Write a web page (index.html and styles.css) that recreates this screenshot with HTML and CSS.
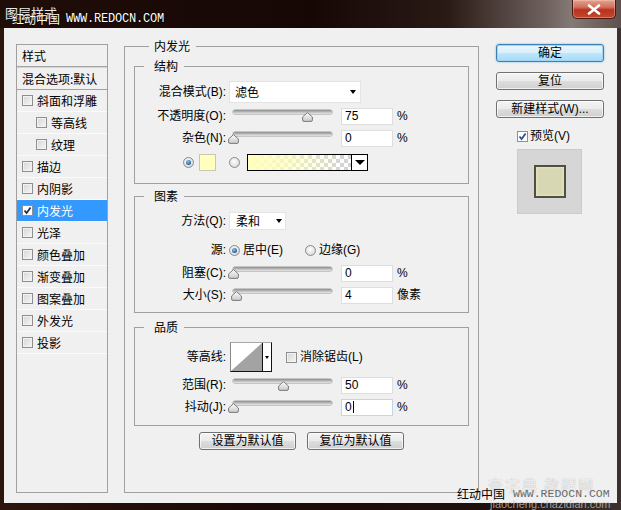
FILE: index.html
```html
<!DOCTYPE html>
<html lang="zh-CN">
<head>
<meta charset="utf-8">
<title>图层样式</title>
<link rel="stylesheet" href="styles.css">
</head>
<body>
<div class="window">
  <div class="titlebar">
    <span class="title">图层样式</span>
    <div class="close">
      <svg width="14" height="11" viewBox="0 0 14 11"><path d="M2 1.5 L12 9.5 M12 1.5 L2 9.5" stroke="#fff" stroke-width="2.6" stroke-linecap="round"/></svg>
    </div>
    <div class="wm-top"><span class="wm-cn">红动中国</span><span class="wm-url">WWW.REDOCN.COM</span></div>
  </div>

  <div class="client">
    <div class="styles">
      <div class="list-head">样式</div>
      <div class="list-head second">混合选项:默认</div>
      <div class="item"><span class="cb"></span>斜面和浮雕</div>
      <div class="item sub"><span class="cb"></span>等高线</div>
      <div class="item sub"><span class="cb"></span>纹理</div>
      <div class="item"><span class="cb"></span>描边</div>
      <div class="item"><span class="cb"></span>内阴影</div>
      <div class="item selected"><span class="cb on"><svg width="9" height="9" viewBox="0 0 9 9"><path d="M1.5 4.5 L3.6 7 L7.6 1.5" fill="none" stroke="#1f2d5c" stroke-width="1.8"/></svg></span>内发光</div>
      <div class="item"><span class="cb"></span>光泽</div>
      <div class="item"><span class="cb"></span>颜色叠加</div>
      <div class="item"><span class="cb"></span>渐变叠加</div>
      <div class="item"><span class="cb"></span>图案叠加</div>
      <div class="item"><span class="cb"></span>外发光</div>
      <div class="item"><span class="cb"></span>投影</div>
    </div>

    <fieldset class="main">
      <legend class="main-legend">内发光</legend>

      <fieldset class="group g-struct">
        <legend>结构</legend>
        <div class="row">
          <span class="lbl">混合模式(B):</span>
          <div class="select blend"><span>滤色</span><i class="arrow"></i></div>
        </div>
        <div class="row gap2">
          <span class="lbl">不透明度(O):</span>
          <div class="slider"><div class="track"></div><svg class="thumb" style="left:75%" width="11" height="10" viewBox="0 0 11 10"><defs><linearGradient id="tg1" x1="0" y1="0" x2="0" y2="1"><stop offset="0" stop-color="#fdfdfd"/><stop offset="1" stop-color="#c9c9c9"/></linearGradient></defs><path d="M5.5 0.6 L10.4 5 L10.4 8 Q10.4 9.4 9 9.4 L2 9.4 Q0.6 9.4 0.6 8 L0.6 5 Z" fill="url(#tg1)" stroke="#707070" stroke-width="0.9"/></svg></div>
          <div class="num">75</div><span class="unit">%</span>
        </div>
        <div class="row">
          <span class="lbl">杂色(N):</span>
          <div class="slider"><div class="track"></div><svg class="thumb" style="left:0%" width="11" height="10" viewBox="0 0 11 10"><path d="M5.5 0.6 L10.4 5 L10.4 8 Q10.4 9.4 9 9.4 L2 9.4 Q0.6 9.4 0.6 8 L0.6 5 Z" fill="url(#tg1)" stroke="#707070" stroke-width="0.9"/></svg></div>
          <div class="num">0</div><span class="unit">%</span>
        </div>
        <div class="row gap2 color-row">
          <span class="radio on"></span>
          <span class="swatch"></span>
          <span class="radio off"></span>
          <div class="gradient"><span class="grad-fill"></span><span class="grad-dd"><i class="arrow big"></i></span></div>
        </div>
      </fieldset>

      <fieldset class="group g-elem">
        <legend>图素</legend>
        <div class="row">
          <span class="lbl">方法(Q):</span>
          <div class="select method"><span>柔和</span><i class="arrow"></i></div>
        </div>
        <div class="row gap7">
          <span class="lbl">源:</span>
          <span class="radio on src"></span><span class="rtext">居中(E)</span>
          <span class="radio off src2"></span><span class="rtext">边缘(G)</span>
        </div>
        <div class="row gap1">
          <span class="lbl">阻塞(C):</span>
          <div class="slider"><div class="track"></div><svg class="thumb" style="left:0%" width="11" height="10" viewBox="0 0 11 10"><path d="M5.5 0.6 L10.4 5 L10.4 8 Q10.4 9.4 9 9.4 L2 9.4 Q0.6 9.4 0.6 8 L0.6 5 Z" fill="url(#tg1)" stroke="#707070" stroke-width="0.9"/></svg></div>
          <div class="num">0</div><span class="unit">%</span>
        </div>
        <div class="row">
          <span class="lbl">大小(S):</span>
          <div class="slider"><div class="track"></div><svg class="thumb" style="left:3%" width="11" height="10" viewBox="0 0 11 10"><path d="M5.5 0.6 L10.4 5 L10.4 8 Q10.4 9.4 9 9.4 L2 9.4 Q0.6 9.4 0.6 8 L0.6 5 Z" fill="url(#tg1)" stroke="#707070" stroke-width="0.9"/></svg></div>
          <div class="num">4</div><span class="unit">像素</span>
        </div>
      </fieldset>

      <fieldset class="group g-qual">
        <legend>品质</legend>
        <div class="row tall">
          <span class="lbl">等高线:</span>
          <div class="contour">
            <svg class="curve" width="31" height="28" viewBox="0 0 31 28"><rect width="31" height="28" fill="#fff"/><polygon points="0,28 31,0 31,28" fill="#a3a3a3"/></svg>
            <span class="contour-dd"><i class="arrow tiny"></i></span>
          </div>
          <span class="cb aa"></span><span class="rtext">消除锯齿(L)</span>
        </div>
        <div class="row gap2">
          <span class="lbl">范围(R):</span>
          <div class="slider"><div class="track"></div><svg class="thumb" style="left:50%" width="11" height="10" viewBox="0 0 11 10"><path d="M5.5 0.6 L10.4 5 L10.4 8 Q10.4 9.4 9 9.4 L2 9.4 Q0.6 9.4 0.6 8 L0.6 5 Z" fill="url(#tg1)" stroke="#707070" stroke-width="0.9"/></svg></div>
          <div class="num">50</div><span class="unit">%</span>
        </div>
        <div class="row">
          <span class="lbl">抖动(J):</span>
          <div class="slider"><div class="track"></div><svg class="thumb" style="left:0%" width="11" height="10" viewBox="0 0 11 10"><path d="M5.5 0.6 L10.4 5 L10.4 8 Q10.4 9.4 9 9.4 L2 9.4 Q0.6 9.4 0.6 8 L0.6 5 Z" fill="url(#tg1)" stroke="#707070" stroke-width="0.9"/></svg></div>
          <div class="num focus">0<span class="caret"></span></div><span class="unit">%</span>
        </div>
      </fieldset>

      <div class="btns">
        <button class="btn wide">设置为默认值</button>
        <button class="btn wide">复位为默认值</button>
      </div>
    </fieldset>

    <div class="side">
      <button class="btn side-btn default">确定</button>
      <button class="btn side-btn">复位</button>
      <button class="btn side-btn">新建样式(W)...</button>
      <div class="preview-check"><span class="cb on"><svg width="9" height="9" viewBox="0 0 9 9"><path d="M1.5 4.5 L3.6 7 L7.6 1.5" fill="none" stroke="#2b4f95" stroke-width="1.8"/></svg></span><span>预览(V)</span></div>
      <div class="preview"><div class="preview-inner"></div></div>
    </div>
  </div>

  <div class="bottom-frame"></div>

  <div class="wm-faded">查字典 教程网</div>
  <div class="wm-faded-url">jiaocheng.chazidian.com</div>
  <div class="wm-bottom"><span class="wm-cn">红动中国</span><span class="wm-url">WWW.REDOCN.COM</span></div>
</div>
</body>
</html>
```

FILE: styles.css
```css
* { box-sizing: border-box; }
html, body { margin: 0; padding: 0; }
body {
  width: 621px; height: 510px; overflow: hidden;
  background: #1b0b07;
  font-family: "Liberation Sans", "Noto Sans CJK SC", sans-serif;
  font-size: 12px; color: #000;
}
.window {
  position: relative;
  width: 621px; height: 510px;
  display: flex; flex-direction: column;
  background: linear-gradient(to right, #2c150b 0%, #1a0906 40%, #1f110d 80%, #3d322f 100%);
}

/* title bar */
.titlebar {
  flex: none; height: 28px; position: relative;
  display: flex; align-items: flex-start;
  background: linear-gradient(to right, #1f0d08 0%, #160705 50%, #2a1a16 72%, #6f625e 88%, #857975 92%, #5e514d 100%);
}
.title {
  margin: 5px 0 0 5px;
  color: #e8e8e8; font-size: 13px; line-height: 15px;
  font-family: "Noto Sans CJK SC", sans-serif;
}
.close {
  margin-left: auto; margin-right: 5px;
  width: 44px; height: 19px;
  display: grid; place-items: center;
  border: 1px solid #4a1a12; border-top: 0;
  border-radius: 0 0 5px 5px;
  background: linear-gradient(#e5a291 0%, #d0705c 40%, #b7321f 55%, #c4472c 100%);
  box-shadow: inset 0 0 0 1px rgba(255,220,210,0.35);
}
.wm-top {
  position: absolute; left: 12px; top: 11px;
  display: flex; align-items: center; gap: 6px;
  color: #fff; text-shadow: 0 0 1px #000, 0 0 1px #000;
}
.wm-top .wm-cn { font-family: "Noto Sans CJK SC", sans-serif; font-size: 12px; line-height: 16px; }
.wm-top .wm-url { font-family: "Liberation Mono", monospace; font-size: 12px; line-height: 16px; letter-spacing: -0.2px; }

/* client area */
.client {
  flex: none; height: 475px; margin: 0 4px;
  background: #f0f0f0;
  display: flex;
  padding: 11px 0 10px 12px;
}
.bottom-frame { flex: 1; }

/* styles list */
.styles {
  width: 92px; margin-top: 5px;
  border: 1px solid #a0a0a0;
  background: #f0f0f0;
}
.list-head {
  height: 22px; line-height: 21px;
  padding-left: 5px;
  border-bottom: 1px solid #a3a3a3;
  font-family: "Noto Sans CJK SC", sans-serif;
}
.list-head.second { height: 23px; border-top: 1px solid #d4d4d4; line-height: 21px; white-space: nowrap; }
.item {
  height: 22px;
  display: flex; align-items: center; gap: 4px;
  padding-left: 5px;
  border-bottom: 1px solid #fbfbfb;
  font-family: "Noto Sans CJK SC", sans-serif; line-height: 14px;
}
.item.sub { padding-left: 19px; }
.item.selected { background: #3399ff; color: #fff; }

.cb {
  flex: none;
  width: 11px; height: 11px;
  border: 1px solid #8e8f8f;
  background: linear-gradient(135deg, #d6d6d6, #f6f6f6);
  box-shadow: inset 0 0 0 1px #f2f2f2;
  display: grid; place-items: center;
}
.cb.on { background: #fff; box-shadow: none; }

/* main panel */
.main {
  width: 355px; margin: 0 0 0 16px;
  padding: 0 9px;
  border: 1px solid #a0a0a0;
  min-width: 0;
}
fieldset { margin: 0; }
legend {
  font-family: "Noto Sans CJK SC", sans-serif;
  font-size: 12px; line-height: 14px; height: 14px;
}
.main-legend { margin-left: 15px; padding: 0 6px 0 5px; }
.group {
  border: 1px solid #a0a0a0;
  padding: 0;
  min-width: 0;
}
.group legend { margin-left: 9px; padding: 0 6px 0 10px; }
.g-struct { margin-top: 6px; padding: 8px 0 10px; }
.g-elem { margin-top: 5px; padding: 7px 0 6px; }
.g-qual { margin-top: 7px; padding: 8px 0 7px; }

.row { height: 22px; display: flex; align-items: center; }
.row.tall { height: 30px; }
.row.gap1 { margin-top: 1px; }
.row.gap2 { margin-top: 2px; }
.row.gap7 { margin-top: 7px; }
.lbl {
  flex: none; width: 91px; text-align: right;
  line-height: 14px; white-space: nowrap;
}

.select {
  margin-left: 3px;
  display: flex; align-items: center; justify-content: space-between;
  background: #fff;
  border: 1px solid #e4e4e4;
  font-family: "Noto Sans CJK SC", sans-serif; line-height: 14px;
}
.select.blend { width: 132px; height: 22px; padding: 0 4px 0 5px; }
.select.method { width: 57px; height: 18px; padding: 0 3px 0 6px; }
.arrow {
  display: block; width: 0; height: 0;
  border-left: 3.5px solid transparent; border-right: 3.5px solid transparent;
  border-top: 4px solid #000;
}
.arrow.big { border-left-width: 5px; border-right-width: 5px; border-top-width: 5px; }
.arrow.tiny { border-left-width: 2.5px; border-right-width: 2.5px; border-top-width: 3px; }

.slider {
  position: relative;
  width: 99px; height: 13px; margin-left: 7px;
}
.track {
  height: 4px; margin-top: 0;
  border-radius: 2px;
  background: linear-gradient(#8d8d8d, #c4c4c4 60%, #e6e6e6);
  box-shadow: 0 0 0 0.5px #9a9a9a;
}
.thumb { position: absolute; top: 2px; margin-left: -5px; }

.num {
  width: 52px; height: 17px; margin-left: 9px;
  background: #fff; border: 1px solid #dedede;
  padding-left: 3px;
  font-size: 12px; line-height: 15px;
  display: flex; align-items: center;
}
.num.focus { border-color: #c2d6ea; }
.caret { display: inline-block; width: 1px; height: 12px; background: #000; margin-left: 1px; }
.unit { margin-left: 4px; line-height: 14px; }

.color-row { padding-left: 48px; }
.radio {
  flex: none;
  width: 11px; height: 11px; border-radius: 50%;
  border: 1px solid #8b8b8b;
  background: radial-gradient(circle at 45% 40%, #ffffff 0%, #e2e2e2 60%, #c8c8c8 100%);
  display: grid; place-items: center;
}
.radio.on::after {
  content: ""; width: 5px; height: 5px; border-radius: 50%;
  background: radial-gradient(circle at 40% 35%, #8ec6f0, #1f5f9c 70%, #123f6e);
}
.swatch {
  width: 17px; height: 17px; margin-left: 5px;
  background: #ffffbe; border: 1px solid #c8c8b0;
}
.color-row .radio.off { margin-left: 13px; }
.gradient {
  margin-left: 7px;
  width: 121px; height: 17px;
  border: 1px solid #000;
  display: flex;
}
.grad-fill {
  flex: 1;
  background:
    linear-gradient(to right, #ffffbe 0%, rgba(255,255,190,0.7) 40%, rgba(255,255,190,0) 90%),
    repeating-conic-gradient(#d4d4d4 0 25%, #ffffff 0 50%) 0 0 / 8px 8px;
}
.grad-dd {
  width: 16px; border-left: 1px solid #000; background: #fff;
  display: grid; place-items: center;
}

.radio.src { margin-left: 3px; }
.rtext { margin-left: 3px; line-height: 14px; white-space: nowrap; }
.radio.src2 { margin-left: 22px; }

.contour {
  margin-left: 4px;
  width: 42px; height: 30px;
  display: flex;
  border: 1px solid; border-color: #a8a8a8 #111 #111 #8a8a8a;
}
.curve { display: block; }
.contour-dd {
  flex: 1; border-left: 1px solid #111; background: #fff;
  display: grid; place-items: center;
}
.cb.aa { margin-left: 14px; }

.btns {
  margin-top: 6px;
  display: flex; justify-content: center; gap: 11px;
}
.btn {
  height: 18px; padding: 0;
  border: 1px solid #707070; border-radius: 3px;
  background: linear-gradient(#f4f4f4 0%, #ebebeb 48%, #dddddd 52%, #cfcfcf 100%);
  box-shadow: inset 0 0 0 1px rgba(255,255,255,0.7);
  font-family: "Liberation Sans", "Noto Sans CJK SC", sans-serif;
  font-size: 12px; line-height: 15px; color: #000;
}
.btn.wide { width: 97px; }

/* right column */
.side {
  width: 108px; margin: 5px 0 0 17px;
  display: flex; flex-direction: column;
}
.side-btn { width: 108px; margin-bottom: 10px; }
.btn.default {
  border-color: #3c7fb1;
  background: linear-gradient(#eaf6fd 0%, #d9f0fc 48%, #bee6fd 52%, #a7d9f5 100%);
  box-shadow: inset 0 0 0 1px #9ed6f5, 0 0 2px #6cb4e2;
}
.preview-check {
  margin-top: 2px; padding-left: 21px;
  height: 12px;
  display: flex; align-items: center; gap: 2px;
  line-height: 14px;
}
.preview {
  margin: 7px 0 0 21px;
  width: 65px; height: 65px;
  background: #d6d6d6;
  border: 1px solid #cbcbcb;
  display: grid; place-items: center;
}
.preview-inner {
  width: 32px; height: 33px;
  background: #d8d7b3;
  border: 2px solid #4f4f42;
  box-shadow: inset 0 0 3px #f4f3cc;
}

/* watermarks */
.wm-bottom {
  position: absolute; left: 457px; top: 486px;
  display: flex; align-items: center; gap: 8px;
}
.wm-bottom .wm-cn { font-family: "Noto Sans CJK SC", sans-serif; font-size: 12px; line-height: 16px; color: #000; }
.wm-bottom .wm-url { font-family: "Liberation Mono", monospace; font-size: 11.5px; line-height: 16px; color: #6a6a6a; }
.wm-faded {
  position: absolute; left: 488px; top: 476px;
  font-family: "Noto Sans CJK SC", sans-serif; font-size: 15px; line-height: 18px;
  letter-spacing: 2px;
  color: rgba(255,255,255,0.75);
  text-shadow: 0 0 1px rgba(120,120,120,0.6);
}
.wm-faded-url {
  position: absolute; left: 490px; top: 499px;
  font-family: "Liberation Sans", sans-serif; font-size: 11px; line-height: 11px;
  color: rgba(200,200,200,0.75);
}
```
